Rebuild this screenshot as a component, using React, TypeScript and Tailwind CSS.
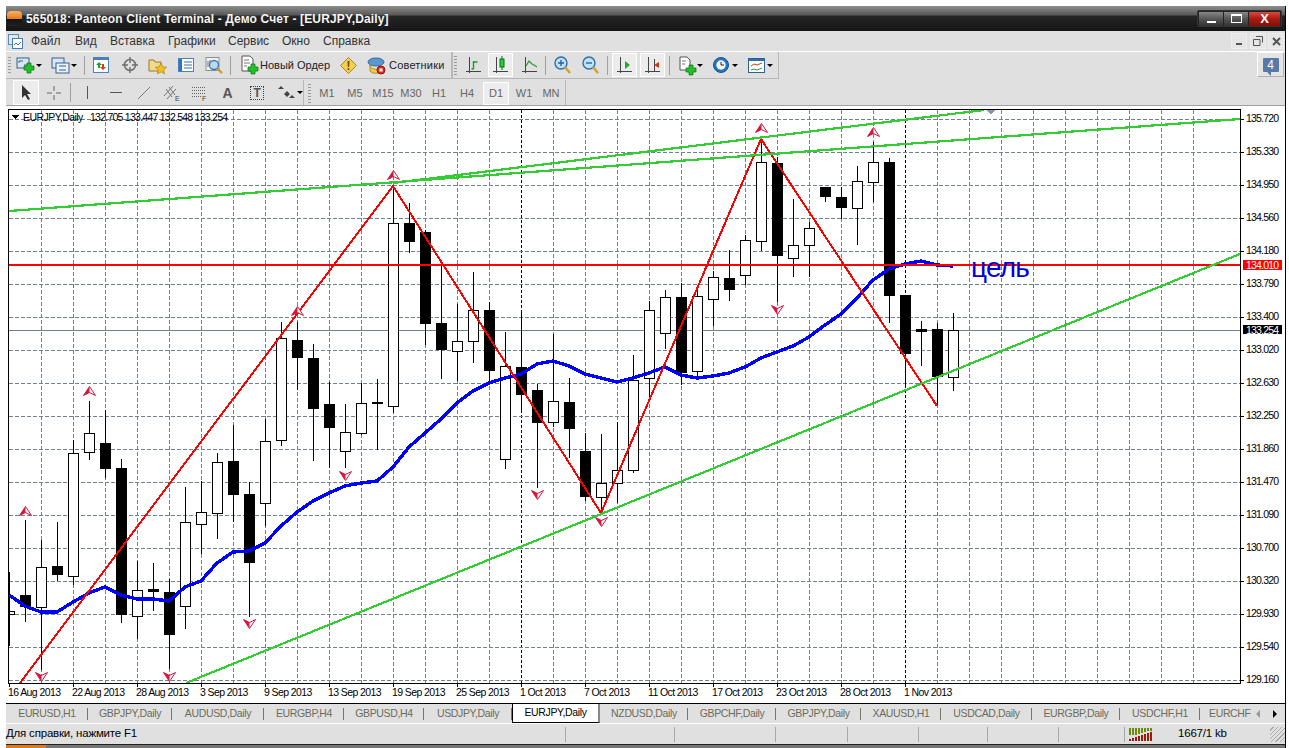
import React from "react";

// x, wick top, wick bottom, body top, body bottom, 1 = black body
const candles: number[][] = [
  [9, 572, 646, 611, 614, 0],
  [25, 520, 622, 595, 607, 1],
  [41, 540, 670, 567, 607, 0],
  [57, 522, 581, 566, 575, 1],
  [73, 440, 585, 453, 576, 0],
  [89, 401, 460, 433, 452, 0],
  [105, 410, 478, 443, 469, 1],
  [121, 459, 623, 468, 615, 1],
  [137, 561, 639, 590, 616, 0],
  [153, 563, 611, 589, 592, 1],
  [169, 579, 669, 592, 635, 1],
  [185, 487, 629, 522, 606, 0],
  [201, 481, 554, 512, 524, 0],
  [217, 453, 539, 462, 513, 0],
  [233, 425, 522, 461, 495, 1],
  [249, 482, 617, 494, 563, 1],
  [265, 419, 526, 441, 503, 0],
  [281, 322, 446, 338, 440, 0],
  [297, 322, 390, 340, 358, 1],
  [313, 344, 461, 358, 409, 1],
  [329, 382, 468, 404, 428, 1],
  [345, 404, 468, 432, 451, 0],
  [361, 383, 435, 403, 433, 0],
  [377, 379, 450, 402, 404, 1],
  [393, 187, 413, 223, 406, 0],
  [409, 203, 253, 223, 242, 1],
  [425, 230, 345, 232, 324, 1],
  [441, 265, 379, 323, 350, 1],
  [457, 304, 381, 341, 351, 0],
  [473, 272, 363, 310, 341, 0],
  [489, 302, 382, 310, 371, 1],
  [505, 332, 469, 366, 459, 0],
  [521, 311, 412, 367, 395, 1],
  [537, 384, 488, 390, 423, 1],
  [553, 334, 427, 401, 422, 0],
  [569, 378, 458, 402, 429, 1],
  [585, 433, 501, 451, 497, 1],
  [601, 434, 512, 483, 497, 0],
  [617, 422, 503, 470, 483, 0],
  [633, 355, 473, 380, 470, 0],
  [649, 301, 400, 310, 378, 0],
  [665, 290, 349, 297, 333, 0],
  [681, 283, 385, 297, 373, 1],
  [697, 290, 376, 296, 371, 0],
  [713, 271, 326, 277, 299, 0],
  [729, 250, 301, 278, 290, 1],
  [745, 235, 285, 240, 275, 0],
  [761, 140, 251, 162, 241, 0],
  [777, 157, 302, 163, 256, 1],
  [793, 199, 277, 245, 258, 0],
  [809, 222, 277, 228, 245, 0],
  [825, 187, 202, 187, 197, 1],
  [841, 187, 219, 197, 208, 1],
  [857, 166, 245, 181, 208, 0],
  [873, 142, 202, 162, 182, 0],
  [889, 158, 323, 162, 296, 1],
  [905, 296, 387, 295, 354, 1],
  [921, 321, 366, 329, 332, 1],
  [937, 323, 406, 329, 377, 1],
  [953, 313, 391, 330, 377, 0],
];

const ma =
  "9,595 25,606 41,612 57,612 73,602 89,593 105,587 121,595 137,599 153,599 169,601 185,587 201,581 217,563 233,552 249,551 265,543 281,526 297,512 313,501 329,493 345,486 361,483 377,481 393,467 409,447 425,433 441,419 457,403 473,391 489,383 505,378 521,374 537,364 553,361 569,366 585,374 601,378 617,382 633,378 649,373 665,367 681,375 697,378 713,376 729,373 745,367 761,358 777,352 793,346 809,337 825,325 841,314 857,298 873,280 889,269 905,264 921,261 937,265 953,266";

const prices = ["135.720", "135.330", "134.950", "134.560", "134.180", "133.790", "133.400", "133.020", "132.630", "132.250", "131.860", "131.470", "131.090", "130.700", "130.320", "129.930", "129.540", "129.160"];
const dates = ["16 Aug 2013", "22 Aug 2013", "28 Aug 2013", "3 Sep 2013", "9 Sep 2013", "13 Sep 2013", "19 Sep 2013", "25 Sep 2013", "1 Oct 2013", "7 Oct 2013", "11 Oct 2013", "17 Oct 2013", "23 Oct 2013", "28 Oct 2013", "1 Nov 2013"];
const upArrows = [[25, 511], [89, 391], [297, 311], [393, 175], [761, 128], [873, 132]];
const downArrows = [[41, 677], [169, 677], [249, 624], [345, 476], [537, 495], [601, 522], [777, 310]];

const tabs = [
  { name: "EURUSD,H1", w: "w-[82px]" },
  { name: "GBPJPY,Daily", w: "w-[84px]" },
  { name: "AUDUSD,Daily", w: "w-[92px]" },
  { name: "EURGBP,H4", w: "w-[80px]" },
  { name: "GBPUSD,H4", w: "w-[80px]" },
  { name: "USDJPY,Daily", w: "w-[88px]" },
  { name: "EURJPY,Daily", w: "w-[88px]", active: true },
  { name: "NZDUSD,Daily", w: "w-[88px]" },
  { name: "GBPCHF,Daily", w: "w-[88px]" },
  { name: "GBPJPY,Daily", w: "w-[85px]" },
  { name: "XAUUSD,H1", w: "w-[80px]" },
  { name: "USDCAD,Daily", w: "w-[91px]" },
  { name: "EURGBP,Daily", w: "w-[88px]" },
  { name: "USDCHF,H1", w: "w-[80px]" },
];

const menu = [
  { name: "Файл", w: "w-[44px]" },
  { name: "Вид", w: "w-[35px]" },
  { name: "Вставка", w: "w-[58px]" },
  { name: "Графики", w: "w-[60px]" },
  { name: "Сервис", w: "w-[54px]" },
  { name: "Окно", w: "w-[41px]" },
  { name: "Справка", w: "w-[60px]" },
];

const statusCells = ["w-[109px]", "w-[101px]", "w-[72px]", "w-[71px]", "w-[69px]", "w-[71px]", "w-[66px]"];

const Arrowhead = ({ x, y, down }: { x: number; y: number; down?: boolean }) => (
  <g transform={`translate(${x + 0.5} ${y})${down ? " scale(1 -1)" : ""}`} shapeRendering="auto">
    <path d="M0,-4.5 L6,4.5 L0,1.5 L-6,4.5 Z" fill="#fff" stroke="#dc143c" strokeWidth="1" />
    <path d="M0,-4.5 L-6,4.5 L0,1.5 Z" fill="#dc143c" />
  </g>
);

const Chart = () => (
  <svg viewBox="6 107 1280 596" width="1280" height="596" className="block" shapeRendering="crispEdges" fontFamily="'Liberation Sans', sans-serif" fontSize="10.5">
    {Array.from({ length: 37 }, (_, i) => 41 + i * 32).filter((x) => x < 1240).map((x) => (
      <line key={x} x1={x + 0.5} x2={x + 0.5} y1={110} y2={683} stroke={x === 185 || x === 521 || x === 905 ? "#000" : "#708090"} strokeDasharray={x === 185 || x === 521 || x === 905 ? "3 2" : "4 2"} />
    ))}
    {prices.map((_, i) => (
      <line key={i} x1={9} x2={1240} y1={119.5 + i * 33} y2={119.5 + i * 33} stroke="#708090" strokeDasharray="4 2" />
    ))}
    <rect x={9} y={330} width={1231} height={1} fill="#708090" />
    {candles.map(([x, t, b, bt, bb, black]) => (
      <g key={x}>
        <rect x={x} y={t} width={1} height={b - t} fill="#000" />
        {black ? (
          <rect x={Math.max(x - 5, 9)} y={bt} width={x === 9 ? 6 : 11} height={bb - bt} fill="#000" />
        ) : (
          <rect x={Math.max(x - 5, 9) + 0.5} y={bt + 0.5} width={x === 9 ? 5 : 10} height={bb - bt} fill="#fff" stroke="#000" />
        )}
      </g>
    ))}
    <polyline points={ma} fill="none" stroke="#0000ff" strokeWidth="3.4" />
    <polyline points="20,683 393,186 601,513 761,139 937,406" fill="none" stroke="#ff0000" strokeWidth="2" />
    <line x1={9} x2={1240} y1={265} y2={265} stroke="#ff0000" strokeWidth="2" />
    <line x1={9} x2={1240} y1={211} y2={119} stroke="#32cd32" strokeWidth="2.2" />
    <line x1={393} x2={984} y1={183} y2={110} stroke="#32cd32" strokeWidth="2.2" />
    <line x1={186} x2={1240} y1={683} y2={254} stroke="#32cd32" strokeWidth="2.2" />
    <path d="M986,110 L996,110 L991,114 Z" fill="#8a97a5" />
    {upArrows.map(([x, y]) => (
      <Arrowhead key={x} x={x} y={y} />
    ))}
    {downArrows.map(([x, y]) => (
      <Arrowhead key={x} x={x} y={y} down />
    ))}

    <path d="M11,115 L19,115 L15,119 Z" fill="#000" />
    <text x={23} y={121} fill="#000" letterSpacing="-.55">EURJPY,Daily</text>
    <text x={90} y={121} fill="#000" letterSpacing="-.75">132.705 133.447 132.548 133.254</text>
    <text x={971} y={277} fill="#0000dd" fontSize="28" letterSpacing="-.8">цель</text>

    {/* chart frame and axes */}
    <rect x={8} y={109} width={1233} height={1} fill="#000" />
    <rect x={8} y={683} width={1233} height={1} fill="#000" />
    <rect x={8} y={109} width={1} height={575} fill="#000" />
    <rect x={1240} y={109} width={1} height={575} fill="#000" />
    {prices.map((p, i) => (
      <g key={p}>
        <rect x={1241} y={119 + i * 33} width={3} height={1} fill="#000" />
        <text x={1246} y={122 + i * 33} fill="#000" letterSpacing="-.8">{p}</text>
      </g>
    ))}
    <rect x={1243} y={260} width={39} height={10} fill="#ff0000" />
    <text x={1246} y={269} fill="#fff" letterSpacing="-.8">134.010</text>
    <rect x={1243} y={325} width={39} height={9} fill="#000" />
    <text x={1246} y={333.5} fill="#fff" letterSpacing="-.8">133.254</text>
    {dates.map((d, i) => (
      <g key={d}>
        <rect x={9 + i * 64} y={684} width={1} height={3} fill="#000" />
        <text x={8 + i * 64} y={696} fill="#000" letterSpacing="-.6">{d}</text>
      </g>
    ))}
  </svg>
);

const GreenPlus = ({ x, y }: { x: number; y: number }) => (
  <path transform={`translate(${x} ${y})`} d="M3,0h4v3h3v4h-3v3h-4v-3h-3v-4h3z" fill="#22c02a" stroke="#0d6b12" strokeWidth=".7" />
);

const Caret = () => <div className="h-0 w-0 border-x-[3px] border-t-[3px] border-x-transparent border-t-black" />;

const Ic = ({ w, h, children }: { w: number; h: number; children: React.ReactNode }) => (
  <svg width={w} height={h} viewBox={`0 0 ${w} ${h}`} className="block shrink-0">
    {children}
  </svg>
);

const Axes = ({ stroke = "#444" }: { stroke?: string }) => <path d="M3.5,1V17M0,15.5H15" stroke={stroke} fill="none" />;

const ToolbarTop = () => (
  <div className="flex h-[28px]">
    <div className="flex h-[27px] w-[446px] items-center border-b border-r border-[#b8b8b8] bg-[#e0e0e0]">
      <div className="ml-[2px] mr-[5px] h-[17px] w-[3px] bg-[repeating-linear-gradient(#9a9a9a_0_1px,transparent_1px_3px)]" />
      <Ic w={20} h={20}>
        <rect x="1" y="3" width="12" height="10" fill="#dbe6f5" stroke="#36618f" />
        <path d="M3,6h4M3,6v2M11,10h-3" stroke="#36618f" />
        <GreenPlus x={8} y={8} />
      </Ic>
      <Caret />
      <div className="w-[9px]" />
      <Ic w={20} h={20}>
        <rect x="1" y="3" width="12" height="10" fill="#dbe6f5" stroke="#36618f" />
        <rect x="5" y="8" width="13" height="10" fill="#e9f0f8" stroke="#36618f" />
        <path d="M8,11h7M8,15h7" stroke="#36618f" />
      </Ic>
      <Caret />
      <div className="ml-[7px] mr-[8px] h-[19px] w-px bg-[#a0a0a0]" />
      <Ic w={17} h={17}>
        <rect x=".5" y=".5" width="15" height="15" fill="#fff" stroke="#4d7fb8" />
        <rect x="1" y="1" width="14" height="2" fill="#4d7fb8" />
        <path d="M6,5l3,3h-2v3h-2v-3h-2z" fill="#1f9e2f" />
        <path d="M10,13l-3,-3h2v-3h2v3h2z" fill="#d9391b" />
      </Ic>
      <div className="w-[11px]" />
      <Ic w={18} h={18}>
        <circle cx="9" cy="9" r="5.5" fill="none" stroke="#6d6d6d" strokeWidth="1.5" />
        <path d="M9,1v6M9,11v6M1,9h6M11,9h6" stroke="#6d6d6d" strokeWidth="1.4" />
      </Ic>
      <div className="w-[9px]" />
      <Ic w={19} h={19}>
        <path d="M1,4h5l1,2h6v9H1z" fill="#f3d98a" stroke="#9a7a2a" />
        <path d="M13,7l1.7,3.8 4,.4 -3,2.7 .9,4 -3.6,-2.1 -3.6,2.1 .9,-4 -3,-2.7 4,-.4z" fill="#f0c020" stroke="#a8801a" strokeWidth=".7" />
      </Ic>
      <div className="w-[11px]" />
      <Ic w={16} h={16}>
        <rect x=".5" y="1.5" width="15" height="13" fill="#fff" stroke="#4d7fb8" />
        <rect x="1" y="2" width="3" height="12" fill="#2e74c9" />
        <path d="M6,5h8M6,8h8M6,11h8" stroke="#3a6ea8" />
      </Ic>
      <div className="w-[11px]" />
      <Ic w={18} h={18}>
        <rect x="1" y="1.5" width="13" height="13" fill="#eef1f5" stroke="#8e8e8e" />
        <path d="M3,5v6M5,4v3" stroke="#777" />
        <circle cx="9" cy="9" r="4.5" fill="#bcd8ef" stroke="#3c78ae" strokeWidth="1.3" />
        <path d="M12.5,12.5L17,17" stroke="#c79a22" strokeWidth="2.2" />
      </Ic>
      <div className="ml-[7px] mr-[9px] h-[19px] w-px bg-[#a0a0a0]" />
      <Ic w={20} h={20}>
        <path d="M2,1h8l3,3v12H2z" fill="#fff" stroke="#555" />
        <path d="M4,5h5M4,8h6M4,11h3" stroke="#777" />
        <GreenPlus x={8} y={9} />
      </Ic>
      <span className="w-[80px] text-[#222]">Новый Ордер</span>
      <Ic w={17} h={17}>
        <path d="M8.5,.5L16.5,8.5L8.5,16.5L.5,8.5Z" fill="#f5d04a" stroke="#a8882a" />
        <path d="M7.5,4h2l-.3,6h-1.4zM7.6,11.3h1.8v1.8h-1.8z" fill="#6b4a10" />
      </Ic>
      <div className="w-[10px]" />
      <Ic w={19} h={19}>
        <ellipse cx="9" cy="6" rx="8" ry="4" fill="#5b98cf" stroke="#2f6ca3" />
        <path d="M3,9c0,5 10,6 12,1v5c-3,3-10,3-12,0z" fill="#f3c74a" stroke="#b98d22" />
        <circle cx="14" cy="14" r="4" fill="#e02a1c" stroke="#8d1a10" />
        <rect x="12.5" y="12.5" width="3" height="3" fill="#fff" />
      </Ic>
      <span className="ml-[3px] tracking-[.2px] text-[#222]">Советники</span>
    </div>
    <div className="flex h-[27px] w-[327px] items-center border-b border-l border-r border-[#b8b8b8] bg-[#e0e0e0]">
      <div className="ml-[1px] mr-[9px] h-[19px] w-[3px] bg-[repeating-linear-gradient(#9a9a9a_0_1px,transparent_1px_3px)]" />
      <Ic w={16} h={18}>
        <Axes />
        <path d="M7.5,5v8M7.5,13h-2M7.5,6h4" stroke="#1d9a2a" fill="none" strokeWidth="1.4" />
      </Ic>
      <div className="ml-[6px] flex h-[24px] w-[25px] items-center justify-center border border-white bg-[#ececec]">
        <Ic w={16} h={18}>
          <Axes />
          <rect x="7" y="3" width="4" height="8" fill="#1fd43a" stroke="#0a6a18" />
          <path d="M9,0v3M9,11v3" stroke="#0a6a18" />
        </Ic>
      </div>
      <div className="w-[9px]" />
      <Ic w={16} h={18}>
        <Axes />
        <path d="M4,10l3,-5l3,3l2,1l3,2" stroke="#2f9a3c" fill="none" strokeWidth="1.3" />
      </Ic>
      <div className="ml-[7px] mr-[8px] h-[19px] w-px bg-[#a0a0a0]" />
      <Ic w={17} h={18}>
        <circle cx="7" cy="7" r="6" fill="#bfe0f7" stroke="#2e6fa8" strokeWidth="1.4" />
        <path d="M4,7h6M7,4v6" stroke="#2263a0" strokeWidth="1.4" />
        <path d="M11,11l5,6" stroke="#d0a22a" strokeWidth="2.4" />
      </Ic>
      <div className="w-[11px]" />
      <Ic w={17} h={18}>
        <circle cx="7" cy="7" r="6" fill="#bfe0f7" stroke="#2e6fa8" strokeWidth="1.4" />
        <path d="M4,7h6" stroke="#2263a0" strokeWidth="1.4" />
        <path d="M11,11l5,6" stroke="#d0a22a" strokeWidth="2.4" />
      </Ic>
      <div className="ml-[8px] mr-[4px] h-[19px] w-px bg-[#a0a0a0]" />
      <div className="flex h-[24px] w-[25px] items-center justify-center border border-white bg-[#ececec]">
        <Ic w={16} h={18}>
          <Axes />
          <path d="M8,5l5,4l-5,4z" fill="#22a82a" />
        </Ic>
      </div>
      <div className="ml-[3px] flex h-[24px] w-[25px] items-center justify-center border border-white bg-[#ececec]">
        <Ic w={16} h={18}>
          <Axes />
          <path d="M9.5,3v12" stroke="#444" />
          <path d="M14,6l-5,3l5,3z" fill="#c83a18" />
        </Ic>
      </div>
      <div className="ml-[4px] mr-[9px] h-[19px] w-px bg-[#a0a0a0]" />
      <Ic w={18} h={21}>
        <path d="M1,2h7l3,3v10H1z" fill="#fff" stroke="#555" />
        <path d="M3,6h4M3,9h3" stroke="#777" />
        <GreenPlus x={7} y={10} />
      </Ic>
      <Caret />
      <div className="w-[10px]" />
      <Ic w={16} h={16}>
        <circle cx="8" cy="8" r="7.5" fill="#1f76c6" stroke="#15548f" />
        <circle cx="8" cy="8" r="4.7" fill="#f4f4f4" />
        <path d="M8,5V8h3" stroke="#222" fill="none" />
      </Ic>
      <div className="ml-[3px] mr-[10px]"><Caret /></div>
      <Ic w={17} h={15}>
        <rect x=".5" y=".5" width="16" height="14" fill="#fff" stroke="#2f5e94" />
        <rect x="1" y="1" width="15" height="2" fill="#2f6db0" />
        <path d="M3,8l3,-2l3,1l5,-2" stroke="#c8401c" fill="none" />
        <path d="M3,12l3,-1l3,1l5,-2" stroke="#2e9a3c" fill="none" />
      </Ic>
      <div className="ml-[2px]"><Caret /></div>
    </div>
    <div className="flex-1" />
    <div className="mr-[1px] flex h-[25px] w-[27px] items-center justify-center border border-b-[#b0b0b0] border-l-white border-r-[#b0b0b0] border-t-white bg-[#e4e4e4]">
      <div className="relative h-[14px] w-[16px] rounded-[1px] bg-[#5878a8] text-center text-[12px] leading-[14px] text-white">
        4<div className="absolute left-[4px] top-[14px] h-0 w-0 border-l-[4px] border-t-[4px] border-l-transparent border-t-[#5878a8]" />
      </div>
    </div>
  </div>
);

const ToolbarBottom = () => (
  <div className="flex h-[25px]">
    <div className="flex h-[25px] w-[298px] items-center border-r border-[#b8b8b8]">
      <div className="ml-[7px] flex h-[25px] w-[26px] items-center justify-center border border-white bg-[#ececec]">
        <Ic w={12} h={17}>
          <path d="M2,1v13l3,-3l3,5l2,-1l-3,-5h4z" fill="#333" />
        </Ic>
      </div>
      <div className="w-[7px]" />
      <Ic w={16} h={16}>
        <path d="M8,1v5M8,10v5M1,8h5M10,8h5" stroke="#666" />
      </Ic>
      <div className="ml-[8px] mr-[16px] h-[19px] w-px bg-[#a0a0a0]" />
      <div className="h-[13px] w-px bg-[#555]" />
      <div className="ml-[22px] h-px w-[12px] bg-[#555]" />
      <div className="w-[16px]" />
      <Ic w={12} h={12}>
        <path d="M0,12L12,0" stroke="#777" />
      </Ic>
      <div className="w-[13px]" />
      <Ic w={18} h={17}>
        <path d="M1,12L10,2M4,15L13,5M3,5l6,8M6,3l6,8" stroke="#777" />
        <text x="12" y="17" fontSize="7" fill="#444" fontFamily="'Liberation Sans', sans-serif">E</text>
      </Ic>
      <div className="w-[12px]" />
      <Ic w={16} h={16}>
        <path d="M0,2.5H14M0,5.5H14M0,8.5H14M0,11.5H9" stroke="#666" strokeDasharray="1 1" />
        <text x="10" y="16" fontSize="7" fill="#444" fontFamily="'Liberation Sans', sans-serif">F</text>
      </Ic>
      <span className="ml-[14px] w-[28px] text-[14px] font-bold leading-none text-[#555]">A</span>
      <div className="flex h-[14px] w-[14px] items-center justify-center border border-dotted border-[#444] text-[12px] font-bold leading-none text-[#555]">T</div>
      <div className="w-[14px]" />
      <Ic w={17} h={14}>
        <path d="M3,0l3,3H0zM3,6l3,-3M9,5l3,3H6zM9,11l3,-3H6zM14,9l3,3h-6z" fill="#444" />
      </Ic>
      <div className="ml-[2px]"><Caret /></div>
    </div>
    <div className="ml-[3px] flex h-[25px] w-[259px] items-center border-r border-[#b8b8b8] pt-[2px] text-[#666]">
      <div className="ml-[1px] mr-[2px] h-[19px] w-[3px] bg-[repeating-linear-gradient(#9a9a9a_0_1px,transparent_1px_3px)]" />
      {["M1", "M5", "M15", "M30", "H1", "H4"].map((t) => (
        <span key={t} className="w-[28px] text-center">{t}</span>
      ))}
      <div className="ml-[2px] flex h-[23px] w-[26px] items-center justify-center border border-white bg-[#ececec]">D1</div>
      <span className="ml-[1px] w-[28px] text-center">W1</span>
      <span className="w-[26px] text-center">MN</span>
    </div>
  </div>
);

export default function App() {
  return (
    <div className="h-[748px] w-[1289px] overflow-hidden bg-white pl-[6px] pt-[6px] font-['Liberation_Sans',sans-serif] text-[11px] text-black">
      <div className="flex h-[742px] w-[1280px] flex-col border-r border-black bg-[#e0e0e0]">
        {/* title bar */}
        <div className="flex h-[25px] items-center bg-[linear-gradient(#8e8e8e_0,#585858_9px,#262626_10px,#151515_25px)] pl-[1px] pr-[3px]">
          <div className="h-[15px] w-[15px] rounded-[4px] bg-[linear-gradient(#f7b464_0,#e87a20_50%,#111_55%,#222_100%)]" />
          <span className="ml-[4px] text-[12px] font-bold tracking-[.14px] text-[#f4f4f4]">565018: Panteon Client Terminal - Демо Счет - [EURJPY,Daily]</span>
          <div className="flex-1" />
          <div className="flex h-[17px] w-[85px] items-center rounded-[2px] border border-[#333] bg-[#222] px-px">
            <div className="flex h-[14px] w-[25px] items-center justify-center border-r border-[#222] bg-[linear-gradient(#888,#555_50%,#333)]">
              <div className="mt-[6px] h-[2px] w-[9px] bg-white" />
            </div>
            <div className="flex h-[14px] w-[25px] items-center justify-center border-r border-[#222] bg-[linear-gradient(#888,#555_50%,#333)]">
              <div className="h-[9px] w-[11px] border border-t-2 border-white" />
            </div>
            <div className="flex h-[14px] flex-1 items-center justify-center bg-[linear-gradient(#d84a40,#a81a10_50%,#801008)] text-[13px] font-bold leading-none text-white">X</div>
          </div>
        </div>

        {/* menu */}
        <div className="flex h-[21px] items-center border-b border-white pl-[2px] text-[12px] text-[#333]">
          <Ic w={15} h={15}>
            <rect x=".5" y=".5" width="10" height="10" fill="#dce8f6" stroke="#5a8cc0" />
            <rect x="4.5" y="4.5" width="10" height="10" fill="#fff" stroke="#4a7cb4" />
            <path d="M6,11l2,-2l2,2l3,-3" stroke="#3b6ea6" fill="none" />
          </Ic>
          <div className="w-[8px]" />
          {menu.map((m) => (
            <span key={m.name} className={m.w}>{m.name}</span>
          ))}
          <div className="flex-1" />
          <div className="flex h-[16px] w-[16px] items-end justify-center border border-[#eee] bg-[#e6e6e6] pb-[3px]">
            <div className="h-[2px] w-[6px] bg-[#555]" />
          </div>
          <div className="ml-[3px] flex h-[16px] w-[16px] items-center justify-center border border-[#eee] bg-[#e6e6e6]">
            <Ic w={10} h={10}>
              <path d="M3,.5h6.5v6M.5,3.5h6.5v6h-6.5z" fill="none" stroke="#555" />
            </Ic>
          </div>
          <div className="ml-[2px] mr-[1px] flex h-[16px] w-[16px] items-center justify-center border border-[#eee] bg-[#e6e6e6]">
            <Ic w={9} h={9}>
              <path d="M1,1L8,8M8,1L1,8" stroke="#555" strokeWidth="2" />
            </Ic>
          </div>
        </div>

        <ToolbarTop />
        <ToolbarBottom />
        <div className="h-[2px] border-t border-[#a0a0a0] bg-white" />

        <div className="h-[596px] bg-white">
          <Chart />
        </div>

        {/* tabs */}
        <div className="flex h-[20px] items-center border-t border-black text-[10.5px] tracking-[-.35px] text-[#6c6c5c]">
          {tabs.map((t) =>
            t.active ? (
              <div key={t.name + t.w} className={`${t.w} flex h-[19px] items-center justify-center border-b border-l border-r-2 border-black border-r-[#888] bg-white text-black`}>
                {t.name}
              </div>
            ) : (
              <div key={t.name + t.w} className={`${t.w} relative flex h-[19px] items-center justify-center`}>
                {t.name}
                <div className="absolute right-0 top-[4px] h-[12px] w-px bg-[#77776a]" />
              </div>
            )
          )}
          <span className="ml-[9px] w-[44px] whitespace-nowrap">EURCHF</span>
          <div className="ml-[3px] h-0 w-0 border-y-[4px] border-r-[4px] border-y-transparent border-r-[#999]" />
          <div className="ml-[13px] h-0 w-0 border-y-[4px] border-l-[4px] border-y-transparent border-l-black" />
        </div>

        {/* status bar */}
        <div className="flex h-[21px] items-center border-t border-white text-[11.5px] tracking-[-.2px]">
          <span className="w-[559px]">Для справки, нажмите F1</span>
          {statusCells.map((w) => (
            <div key={w} className={`${w} h-[15px] border-l border-[#a8a8a8]`} />
          ))}
          <div className="flex h-[15px] items-center border-l border-[#a8a8a8] pl-[4px]">
            <Ic w={24} h={13}>
              <path d="M1,0v7M4,0v7M7,0v7M10,0v6M13,0v5M16,0v4M19,0v3M22,0v3" stroke="#6f8a0a" strokeWidth="2" />
              <path d="M1,13v-2M4,13v-3M7,13v-4M10,13v-5M13,13v-6M16,13v-7M19,13v-8M22,13v-9" stroke="#a01a0a" strokeWidth="2" />
            </Ic>
            <span className="ml-[25px]">1667/1 kb</span>
          </div>
          <div className="flex-1" />
          <div className="h-[15px] w-[15px] bg-[repeating-linear-gradient(135deg,transparent_0_2px,#aaa_2px_3px)]" />
        </div>

        <div className="h-px bg-[#222]" />
        <div className="flex h-[3px] bg-[#777]">
          <div className="w-[40px] bg-[#e07a18]" />
        </div>
      </div>
    </div>
  );
}
